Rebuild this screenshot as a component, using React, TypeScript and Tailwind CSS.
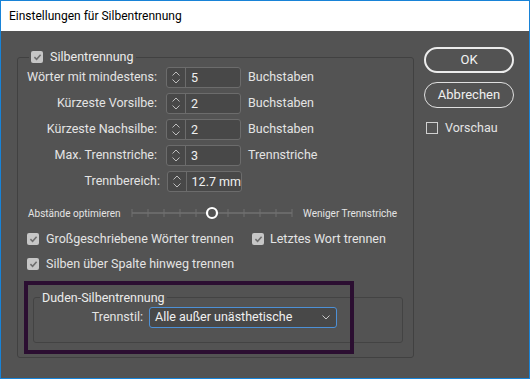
import React from 'react';

const Check = ({ checked }: { checked: boolean }) =>
  checked ? (
    <span className="w-[12px] h-[12px] rounded-[2px] bg-[#c6c6c6] flex items-center justify-center shrink-0">
      <svg width="9" height="8" viewBox="0 0 9 8">
        <path d="M1.4 4.2 L3.6 6.3 L7.6 1.8" stroke="#6e6e6e" strokeWidth="1.6" fill="none" />
      </svg>
    </span>
  ) : (
    <span className="w-[12px] h-[12px] border border-[#d0d0d0] shrink-0" />
  );

const Spin = ({ value }: { value: string }) => (
  <div className="w-[75px] h-[21px] border border-[#6c6c6c] rounded-[3px] bg-[#484848] flex overflow-hidden shrink-0">
    <div className="w-[19px] border-r border-[#6c6c6c] flex flex-col items-center justify-center gap-[3px]">
      <svg width="8" height="5" viewBox="0 0 8 5">
        <path d="M0.5 4.5 L4 1 L7.5 4.5" stroke="#bdbdbd" strokeWidth="1" fill="none" />
      </svg>
      <svg width="8" height="5" viewBox="0 0 8 5">
        <path d="M0.5 0.5 L4 4 L7.5 0.5" stroke="#bdbdbd" strokeWidth="1" fill="none" />
      </svg>
    </div>
    <span className="pl-[5px] leading-[19px] whitespace-nowrap text-[#f0f0f0]">{value}</span>
  </div>
);

const rows = [
  { label: 'Wörter mit mindestens:', value: '5', unit: 'Buchstaben' },
  { label: 'Kürzeste Vorsilbe:', value: '2', unit: 'Buchstaben' },
  { label: 'Kürzeste Nachsilbe:', value: '2', unit: 'Buchstaben' },
  { label: 'Max. Trennstriche:', value: '3', unit: 'Trennstriche' },
];

export default function App() {
  return (
    <div className="relative w-[530px] h-[379px] border border-[#1883d7] bg-[#535353] flex flex-col overflow-hidden font-['Roboto',sans-serif] text-[12.5px] text-[#e4e4e4]">
      {/* Title bar */}
      <div className="h-[30px] bg-white flex items-center pl-[8px] text-[12px] text-black shrink-0">
        Einstellungen für Silbentrennung
      </div>

      <div className="flex flex-1">
        {/* Main group */}
        <div className="ml-[16px] mt-[26px] w-[397px] h-[301px] border border-[#414141] rounded-[3px] flex flex-col">
          <div className="-mt-[8px] ml-[11px] w-fit px-[2px] h-[14px] bg-[#535353] flex items-center gap-[7px]">
            <Check checked />
            <span className="text-[#ececec]">Silbentrennung</span>
          </div>

          <div className="mt-[3px] flex flex-col gap-[5px]">
            {rows.map((r) => (
              <div key={r.label} className="flex items-center h-[21px]">
                <span className="w-[139px] text-right whitespace-nowrap">{r.label}</span>
                <span className="ml-[9px]">
                  <Spin value={r.value} />
                </span>
                <span className="ml-[7px] whitespace-nowrap">{r.unit}</span>
              </div>
            ))}
            <div className="flex items-center h-[21px]">
              <span className="w-[142px] text-right whitespace-nowrap">Trennbereich:</span>
              <span className="ml-[7px]">
                <Spin value="12.7 mm" />
              </span>
            </div>
          </div>

          {/* Slider */}
          <div className="mt-[13px] h-[16px] flex items-center pl-[10px] text-[10px]">
            <span className="w-[103px] whitespace-nowrap">Abstände optimieren</span>
            <svg width="164" height="16" viewBox="0 0 164 16" className="shrink-0">
              <line x1="1" y1="8" x2="161" y2="8" stroke="#717171" strokeWidth="1.5" />
              {[0, 1, 2, 3, 4, 6, 7, 8, 9, 10].map((i) => (
                <line key={i} x1={1 + i * 16} y1="4" x2={1 + i * 16} y2="12" stroke="#717171" strokeWidth="1" />
              ))}
              <circle cx="81" cy="8" r="5" fill="#535353" stroke="#ffffff" strokeWidth="2.2" />
            </svg>
            <span className="ml-[8px] whitespace-nowrap">Weniger Trennstriche</span>
          </div>

          {/* Checkboxes */}
          <div className="mt-[10px] h-[16px] flex items-center pl-[9px]">
            <div className="w-[225px] flex items-center gap-[7px]">
              <Check checked />
              <span className="whitespace-nowrap">Großgeschriebene Wörter trennen</span>
            </div>
            <div className="flex items-center gap-[6px]">
              <Check checked />
              <span className="whitespace-nowrap">Letztes Wort trennen</span>
            </div>
          </div>
          <div className="mt-[9px] h-[16px] flex items-center pl-[9px] gap-[7px]">
            <Check checked />
            <span className="whitespace-nowrap">Silben über Spalte hinweg trennen</span>
          </div>

          {/* Duden group */}
          <div className="mt-[25px] ml-[15px] w-[370px] h-[46px] border border-[#434343] rounded-[3px] flex flex-col">
            <div className="-mt-[8px] ml-[6px] w-fit px-[2px] h-[16px] bg-[#535353] flex items-center text-[#ececec] whitespace-nowrap">
              Duden-Silbentrennung
            </div>
            <div className="mt-[1px] flex items-center h-[21px]">
              <span className="w-[109px] text-right whitespace-nowrap">Trennstil:</span>
              <div className="ml-[6px] w-[188px] h-[21px] border border-[#4d90d6] rounded-[3px] bg-[#484848] flex items-center justify-between pl-[5px] pr-[6px]">
                <span className="whitespace-nowrap text-[#f0f0f0]">Alle außer unästhetische</span>
                <svg width="8" height="5" viewBox="0 0 8 5">
                  <path d="M0.5 0.5 L4 4 L7.5 0.5" stroke="#c8c8c8" strokeWidth="1" fill="none" />
                </svg>
              </div>
            </div>
          </div>
        </div>

        {/* Right column */}
        <div className="ml-[10px] mt-[16px] flex flex-col">
          <button className="w-[90px] h-[26px] rounded-full border-2 border-[#ececec] text-[#f4f4f4] text-[13px] flex items-center justify-center">
            OK
          </button>
          <button className="mt-[9px] w-[90px] h-[26px] rounded-full border-[1.5px] border-[#e0e0e0] text-[#f0f0f0] text-[13px] flex items-center justify-center">
            Abbrechen
          </button>
          <div className="mt-[12px] ml-[2px] h-[16px] flex items-center gap-[7px]">
            <Check checked={false} />
            <span>Vorschau</span>
          </div>
        </div>
      </div>

      {/* annotation frame */}
      <div className="absolute left-[23px] top-[280px] w-[330px] h-[73px] border-4 border-[#2b0e31]" />
    </div>
  );
}
